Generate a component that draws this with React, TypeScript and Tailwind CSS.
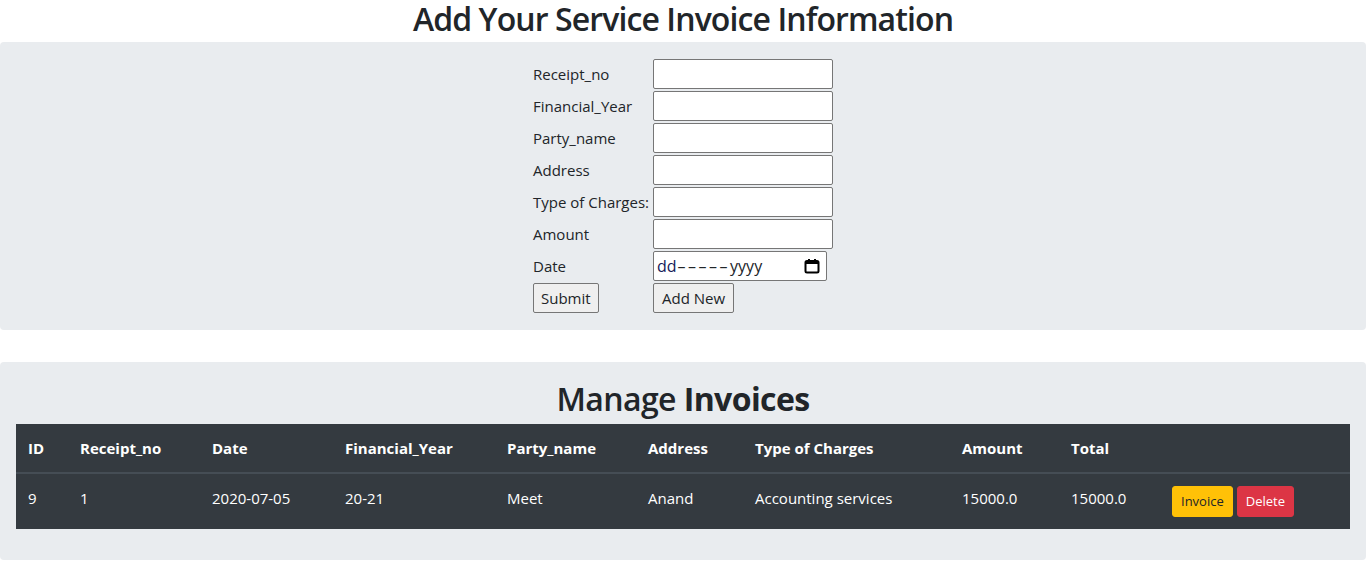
const rows = [
  { id: 9, receipt: '1', date: '2020-07-05', fy: '20-21', party: 'Meet', address: 'Anand', type: 'Accounting services', amount: '15000.0', total: '15000.0' },
];

const fields = ['Receipt_no', 'Financial_Year', 'Party_name', 'Address', 'Type of Charges:', 'Amount'];

function CalendarIcon() {
  return (
    <svg width="16" height="16" viewBox="0 0 16 16" className="shrink-0">
      <rect x="1.5" y="3" width="13" height="11.5" rx="1.5" fill="none" stroke="#000" strokeWidth="2" />
      <rect x="1.5" y="3" width="13" height="3" fill="#000" />
      <rect x="4" y="1" width="2" height="3" fill="#000" />
      <rect x="10" y="1" width="2" height="3" fill="#000" />
    </svg>
  );
}

export default function App() {
  return (
    <div className="min-h-[563px] bg-white text-[#212529] font-['Open_Sans',sans-serif]">
      <h2 className="text-center text-[32px] leading-[36px] font-semibold pt-[1px] mb-[5px] tracking-[-0.9px]">
        Add Your Service Invoice Information
      </h2>

      <div className="bg-[#e9ecef] rounded-[4px] py-4">
        <div className="mx-auto w-[300px] grid grid-cols-[120px_180px] auto-rows-[32px] items-center text-[15px]">
          {fields.map((f) => (
            <div key={f} className="contents">
              <label className="whitespace-nowrap">{f}</label>
              <input type="text" className="h-[30px] w-[180px] bg-white border border-[#767676] rounded-[2px] outline-none" />
            </div>
          ))}
          <label>Date</label>
          <div className="h-[30px] w-[174px] bg-white border border-[#767676] rounded-[2px] flex items-center justify-between pl-[3px] pr-[6px] text-[16px]">
            <span className="whitespace-nowrap">
              <span className="text-[#14205a]">dd</span>
              <span className="tracking-[2.5px] ml-[1px]">–––––</span>
              <span>yyyy</span>
            </span>
            <CalendarIcon />
          </div>
          <div>
            <button className="h-[30px] px-[7px] bg-[#efefef] border border-[#767676] rounded-[2px] text-[15px]">Submit</button>
          </div>
          <div>
            <button className="h-[30px] px-[8px] bg-[#efefef] border border-[#767676] rounded-[2px] text-[15px]">Add New</button>
          </div>
        </div>
      </div>

      <div className="mt-8 bg-[#e9ecef] rounded-[4px] px-4 pt-[18px] pb-[31px]">
        <h2 className="text-center text-[32px] leading-[38px] font-semibold mb-[6px] tracking-[-0.6px]">
          Manage <b className="font-bold">Invoices</b>
        </h2>
        <table className="w-full bg-[#343a40] text-white text-[15px] border-collapse">
          <thead>
            <tr className="border-b-2 border-[#454d55] text-left leading-6">
              <th className="w-[52px] p-3 font-bold">ID</th>
              <th className="w-[132px] p-3 font-bold">Receipt_no</th>
              <th className="w-[133px] p-3 font-bold">Date</th>
              <th className="w-[162px] p-3 font-bold">Financial_Year</th>
              <th className="w-[141px] p-3 font-bold">Party_name</th>
              <th className="w-[107px] p-3 font-bold">Address</th>
              <th className="w-[207px] p-3 font-bold">Type of Charges</th>
              <th className="w-[109px] p-3 font-bold">Amount</th>
              <th className="w-[101px] p-3 font-bold">Total</th>
              <th className="p-3"></th>
            </tr>
          </thead>
          <tbody>
            {rows.map((r) => (
              <tr key={r.id} className="align-top">
                <td className="p-3 leading-6">{r.id}</td>
                <td className="p-3 leading-6">{r.receipt}</td>
                <td className="p-3 leading-6">{r.date}</td>
                <td className="p-3 leading-6">{r.fy}</td>
                <td className="p-3 leading-6">{r.party}</td>
                <td className="p-3 leading-6">{r.address}</td>
                <td className="p-3 leading-6">{r.type}</td>
                <td className="p-3 leading-6">{r.amount}</td>
                <td className="p-3 leading-6">{r.total}</td>
                <td className="p-3">
                  <div className="flex gap-1">
                    <button className="h-[31px] px-2 bg-[#ffc107] text-[#212529] rounded-[3px] text-[13px] border border-[#ffc107]">Invoice</button>
                    <button className="h-[31px] px-2 bg-[#dc3545] text-white rounded-[3px] text-[13px] border border-[#dc3545]">Delete</button>
                  </div>
                </td>
              </tr>
            ))}
          </tbody>
        </table>
      </div>
    </div>
  );
}
